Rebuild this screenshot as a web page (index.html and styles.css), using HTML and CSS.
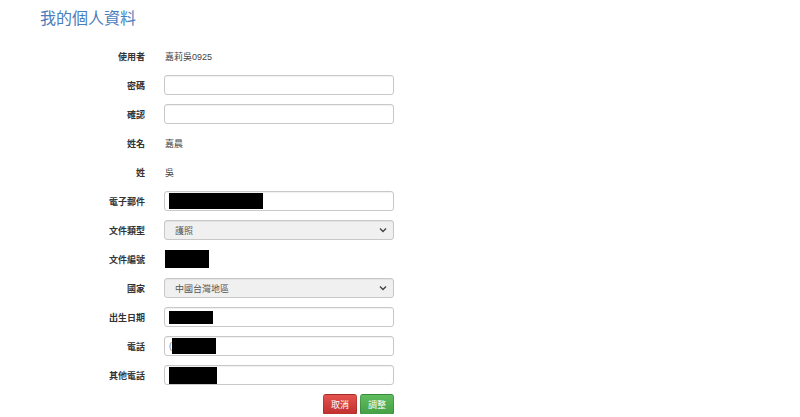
FILE: index.html
```html
<!DOCTYPE html>
<html lang="zh-Hant">
<head>
  <meta charset="UTF-8">
  <title>我的個人資料</title>
  <link rel="stylesheet" href="styles.css">
</head>
<body>
  <div class="profile-page">
    <h1 class="page-title">我的個人資料</h1>

    <div class="profile-form">
      <label class="form-label">使用者</label>
      <div class="form-value">嘉莉吳0925</div>

      <label class="form-label">密碼</label>
      <div class="form-input"></div>

      <label class="form-label">確認</label>
      <div class="form-input"></div>

      <label class="form-label">姓名</label>
      <div class="form-value">嘉晨</div>

      <label class="form-label">姓</label>
      <div class="form-value">吳</div>

      <label class="form-label">電子郵件</label>
      <div class="form-input"><span class="redact redact-email"></span></div>

      <label class="form-label">文件類型</label>
      <div class="form-select">
        <span>護照</span>
        <svg class="chevron" width="8" height="6" viewBox="0 0 8 6"><path d="M1 1.5 L4 4.5 L7 1.5" fill="none" stroke="#444" stroke-width="1.4"/></svg>
      </div>

      <label class="form-label">文件編號</label>
      <div class="form-value"><span class="redact redact-doc"></span></div>

      <label class="form-label">國家</label>
      <div class="form-select">
        <span>中國台灣地區</span>
        <svg class="chevron" width="8" height="6" viewBox="0 0 8 6"><path d="M1 1.5 L4 4.5 L7 1.5" fill="none" stroke="#444" stroke-width="1.4"/></svg>
      </div>

      <label class="form-label">出生日期</label>
      <div class="form-input"><span class="redact redact-birth"></span></div>

      <label class="form-label">電話</label>
      <div class="form-input"><span class="phone-prefix">(</span><span class="redact redact-phone"></span></div>

      <label class="form-label">其他電話</label>
      <div class="form-input"><span class="redact redact-other"></span></div>

      <div></div>
      <div class="form-actions">
        <button class="btn btn-cancel">取消</button>
        <button class="btn btn-save">調整</button>
      </div>
    </div>
  </div>
</body>
</html>
```

FILE: styles.css
```css
body {
  margin: 0;
  background: #ffffff;
  font-family: "Liberation Sans", "Noto Sans CJK TC", sans-serif;
  color: #333;
}

.profile-page {
  padding-top: 9px;
}

.page-title {
  margin: 0 0 0 40px;
  font-size: 16px;
  line-height: 20px;
  font-weight: normal;
  color: #4a7dbd;
}

.profile-form {
  display: grid;
  grid-template-columns: 145px 230px;
  grid-auto-rows: 20px;
  column-gap: 19px;
  row-gap: 9px;
  margin-top: 17px;
}

.form-label {
  display: flex;
  align-items: center;
  justify-content: flex-end;
  font-size: 9px;
  font-weight: bold;
  color: #333;
}

.form-value {
  display: flex;
  align-items: center;
  padding-left: 1px;
  font-size: 9px;
  color: #444;
}

.form-input,
.form-select {
  box-sizing: border-box;
  display: flex;
  align-items: center;
  border: 1px solid #c8c8c8;
  border-radius: 3px;
  box-shadow: inset 0 1px 1px rgba(0, 0, 0, 0.06);
  background: #fff;
  padding-left: 4px;
}

.form-select {
  background: #f0f0f0;
  padding: 0 6px 0 10px;
  justify-content: space-between;
  font-size: 9px;
  color: #555;
}

.redact {
  display: inline-block;
  background: #000;
}

.redact-email { width: 94px; height: 16px; }
.redact-doc { width: 44px; height: 18px; margin-left: 0; }
.redact-birth { width: 44px; height: 13px; }
.redact-other { width: 48px; height: 17px; }
.redact-phone { width: 44px; height: 16px; }

.phone-prefix {
  font-size: 9px;
  color: #888;
  width: 3px;
  overflow: hidden;
}

.form-actions {
  display: flex;
  justify-content: flex-end;
  gap: 3px;
  grid-row: span 1;
  height: 21px;
}

.btn {
  width: 34px;
  height: 21px;
  border: 1px solid rgba(0, 0, 0, 0.15);
  border-radius: 3px;
  color: #fff;
  font-family: "Liberation Serif", "Noto Sans CJK TC", serif;
  font-size: 9px;
  padding: 0;
  cursor: pointer;
}

.btn-cancel {
  background: linear-gradient(#e5534f, #c0302c);
}

.btn-save {
  background: linear-gradient(#5fbe5f, #45a045);
}
```
